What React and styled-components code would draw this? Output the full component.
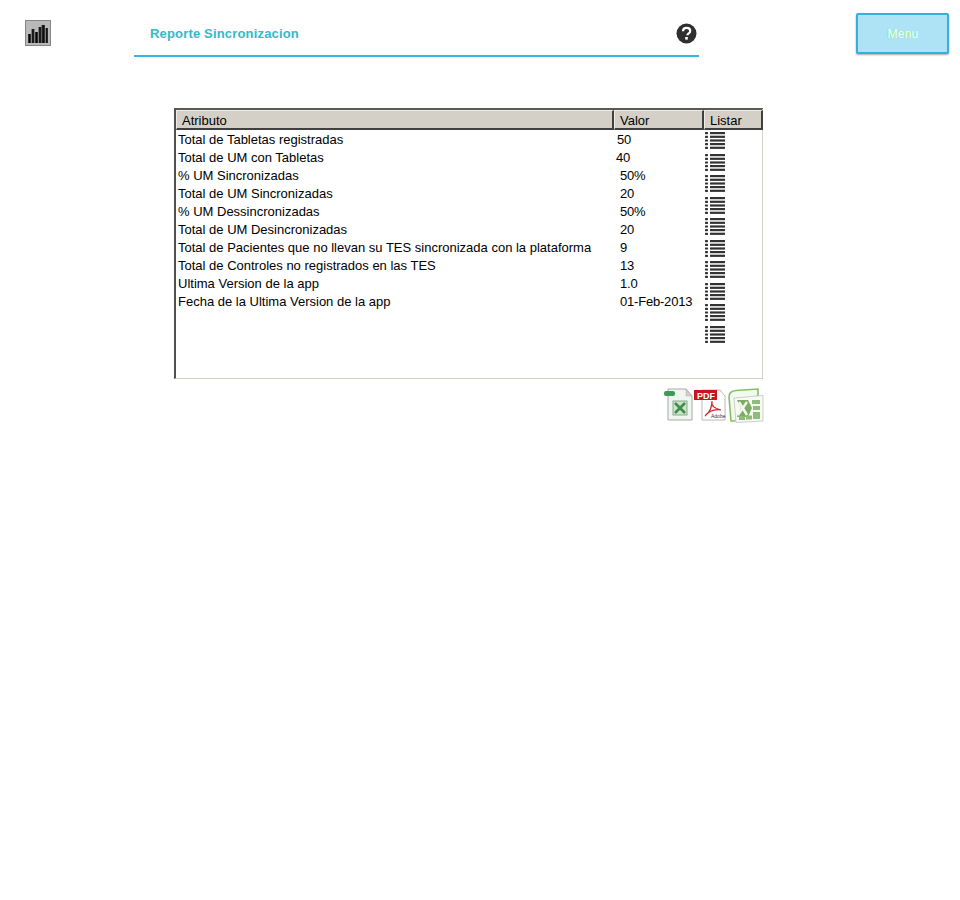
import React from "react"
import styled, { createGlobalStyle } from "styled-components"

const GlobalStyle = createGlobalStyle`
  html, body {
    margin: 0;
    padding: 0;
    background: #fff;
    font-family: "Liberation Sans", Arial, sans-serif;
  }
`

const Page = styled.div`
  width: 960px;
  height: 900px;
  overflow: hidden;
  background: #fff;
`

const TopBar = styled.header`
  display: flex;
  align-items: flex-start;
  height: 108px;
`

const ChartBadge = styled.div`
  width: 26px;
  height: 26px;
  margin: 20px 83px 0 25px;
  box-sizing: border-box;
  border: 1px solid #858585;
  background: #b9b9b9;
`

const TitleBlock = styled.div`
  display: flex;
  align-items: center;
  justify-content: space-between;
  box-sizing: border-box;
  width: 565px;
  height: 57px;
  padding: 11px 2px 0 16px;
  border-bottom: 2px solid #35b5e0;
`

const Title = styled.h1`
  margin: 0;
  font-size: 13px;
  font-weight: 700;
  letter-spacing: 0.17px;
  color: #35b8c8;
`

const HelpIcon = styled.svg`
  display: block;
  width: 21px;
  height: 21px;
`

const MenuButton = styled.button`
  box-sizing: border-box;
  width: 93px;
  height: 41px;
  margin: 13px 0 0 157px;
  padding: 0 0 0 1px;
  border: 2px solid #37b0d8;
  border-radius: 2px;
  background: #aee2f5;
  box-shadow: 0 1px 2px rgba(0, 0, 0, 0.35);
  font-family: "Liberation Sans", Arial, sans-serif;
  font-size: 12px;
  letter-spacing: 0.2px;
  color: #eafff4;
  text-shadow: -1px 0 0 #8fe8a8;
`

const Report = styled.main`
  width: 589px;
  margin-left: 174px;
`

const Grid = styled.div`
  box-sizing: border-box;
  height: 271px;
  border-style: solid;
  border-width: 2px 1px 1px 2px;
  border-color: #5a5a5a #d4d0c8 #d4d0c8 #505050;
  font-size: 13px;
  color: #000;
`

const HeaderRow = styled.div`
  display: grid;
  grid-template-columns: 438px 90px 59px;
  height: 20px;
`

const HeaderCell = styled.div`
  box-sizing: border-box;
  height: 20px;
  padding-left: ${(p) => p.$pad}px;
  background: #d4d0c8;
  border-style: solid;
  border-width: 1px 2px 2px 1px;
  border-color: #efece6 #404040 #404040 #efece6;
  line-height: 19px;
`

const Body = styled.div`
  display: grid;
  grid-template-columns: 528px 59px;
`

const Rows = styled.div`
  padding-top: 1px;
`

const Row = styled.div`
  display: grid;
  grid-template-columns: 438px 90px;
  height: 18px;
  line-height: 18px;
  white-space: nowrap;
`

const Attr = styled.div`
  padding-left: 2px;
`

const Value = styled.div`
  padding-left: ${(p) => p.$pad}px;
  letter-spacing: -0.2px;
`

const ListColumn = styled.div`
  display: flex;
  flex-direction: column;
  gap: 4.5px;
  padding: 2px 0 0 1px;
`

const ListIcon = styled.svg`
  display: block;
  width: 20px;
  height: 17px;
`

const Exports = styled.div`
  display: flex;
  justify-content: flex-end;
  align-items: flex-start;
  margin: 9px -1px 0 0;
`

const FileIcon = styled.svg`
  display: block;
  flex: none;
`

const rows = [
  ["Total de Tabletas registradas", "50", 3],
  ["Total de UM con Tabletas", "40", 2],
  ["% UM Sincronizadas", "50%", 6],
  ["Total de UM Sincronizadas", "20", 6],
  ["% UM Dessincronizadas", "50%", 6],
  ["Total de UM Desincronizadas", "20", 6],
  ["Total de Pacientes que no llevan su TES sincronizada con la plataforma", "9", 6],
  ["Total de Controles no registrados en las TES", "13", 6],
  ["Ultima Version de la app", "1.0", 6],
  ["Fecha de la Ultima Version de la app", "01-Feb-2013", 6],
]

const ListGlyph = () => (
  <ListIcon viewBox="0 0 20 17">
    {[0, 3.7, 7.4, 11, 14.7].map((y) => (
      <g key={y} fill="#333">
        <rect x="0" y={y} width="3" height="2.2" rx="0.6" />
        <rect x="5" y={y} width="15" height="2.2" />
      </g>
    ))}
  </ListIcon>
)

const App = () => {
  return (
    <Page>
      <GlobalStyle />
      <TopBar>
        <ChartBadge>
          <svg width="24" height="24" viewBox="0 0 24 24">
            <defs>
              <linearGradient id="bar" x1="0" x2="1" y1="0" y2="0">
                <stop offset="0" stopColor="#444" />
                <stop offset="0.5" stopColor="#050505" />
                <stop offset="1" stopColor="#444" />
              </linearGradient>
            </defs>
            <g fill="url(#bar)">
              <rect x="2" y="13" width="3" height="9" />
              <rect x="5.5" y="8" width="3" height="14" />
              <rect x="9" y="11" width="3" height="11" />
              <rect x="12.5" y="6" width="3" height="16" />
              <rect x="15.5" y="4" width="3.5" height="18" />
              <rect x="19.5" y="7" width="2.5" height="15" />
            </g>
          </svg>
        </ChartBadge>
        <TitleBlock>
          <Title>Reporte Sincronizacion</Title>
          <HelpIcon viewBox="0 0 21 21">
            <circle cx="10.5" cy="10.5" r="10" fill="#2f2f2f" />
            <path
              d="M7 8.2c0-2 1.6-3.3 3.6-3.3s3.6 1.2 3.6 3c0 1.5-.9 2.2-1.8 2.8-.7.5-1 .8-1 1.6"
              fill="none"
              stroke="#fff"
              strokeWidth="2.2"
            />
            <rect x="9.2" y="14" width="2.6" height="2.6" fill="#fff" />
          </HelpIcon>
        </TitleBlock>
        <MenuButton>Menu</MenuButton>
      </TopBar>

      <Report>
        <Grid>
          <HeaderRow>
            <HeaderCell $pad={5}>Atributo</HeaderCell>
            <HeaderCell $pad={5}>Valor</HeaderCell>
            <HeaderCell $pad={5}>Listar</HeaderCell>
          </HeaderRow>
          <Body>
            <Rows>
              {rows.map(([name, value, pad]) => (
                <Row key={name}>
                  <Attr>{name}</Attr>
                  <Value $pad={pad}>{value}</Value>
                </Row>
              ))}
            </Rows>
            <ListColumn>
              {rows.map(([name]) => (
                <ListGlyph key={name} />
              ))}
            </ListColumn>
          </Body>
        </Grid>
        <Exports>
          {/* xls sheet */}
          <FileIcon width="30" height="33" viewBox="0 0 30 33">
            <path d="M4 1h18l6 7v24H4z" fill="#f0f7f0" stroke="#a8a8a8" />
            <path d="M22 1v7h6z" fill="#d0d0d0" stroke="#a8a8a8" strokeWidth="0.5" />
            <rect x="0" y="3" width="11" height="5" rx="2" fill="#3f9a55" />
            <rect x="9" y="13" width="14" height="14" fill="#cfe4cf" stroke="#8aa88a" />
            <path d="M11 15l10 10M21 15L11 25" stroke="#3a8f4a" strokeWidth="2.6" />
          </FileIcon>
          <FileIcon width="34" height="33" viewBox="0 0 34 33">
            <path d="M8 2h18l5 6v24H8z" fill="#fff" stroke="#b8b8b8" />
            <rect x="0" y="2" width="23" height="10" fill="#c4161c" />
            <text x="3" y="10.5" fontFamily="Liberation Sans" fontSize="9" fontWeight="700" fill="#fff">PDF</text>
            <path
              d="M18 13c-1 5 2 7 9 9-6-1-12 1-16 6 4-3 7-9 7-15z"
              fill="none"
              stroke="#d2242a"
              strokeWidth="1.2"
            />
            <text x="17" y="30" fontFamily="Liberation Sans" fontSize="5" fill="#333">Adobe</text>
          </FileIcon>
          <FileIcon width="36" height="36" viewBox="0 0 36 36">
            <path d="M1 9Q1 3 8 2.5L30 1v6L7 33H3z" fill="#f4f9ee" stroke="#86bd68" strokeWidth="1.6" />
            <path d="M6 10l29-2.5V33L8 34.5z" fill="#f7f9f4" stroke="#cfcfcf" />
            <path d="M9 12h11l4 8-4 9H9l4-9z" fill="#7cab63" />
            <path d="M11 14l8 13M19 14L10 27" stroke="#f4f9ee" strokeWidth="2.4" />
            <g fill="#90bb7b">
              <rect x="24" y="12" width="8" height="4" />
              <rect x="25" y="18" width="7" height="4" />
              <rect x="11" y="28" width="6" height="4" />
              <rect x="18" y="27.5" width="6" height="4" />
              <rect x="25" y="24" width="7" height="7" />
            </g>
          </FileIcon>
        </Exports>
      </Report>
    </Page>
  )
}

export default App
